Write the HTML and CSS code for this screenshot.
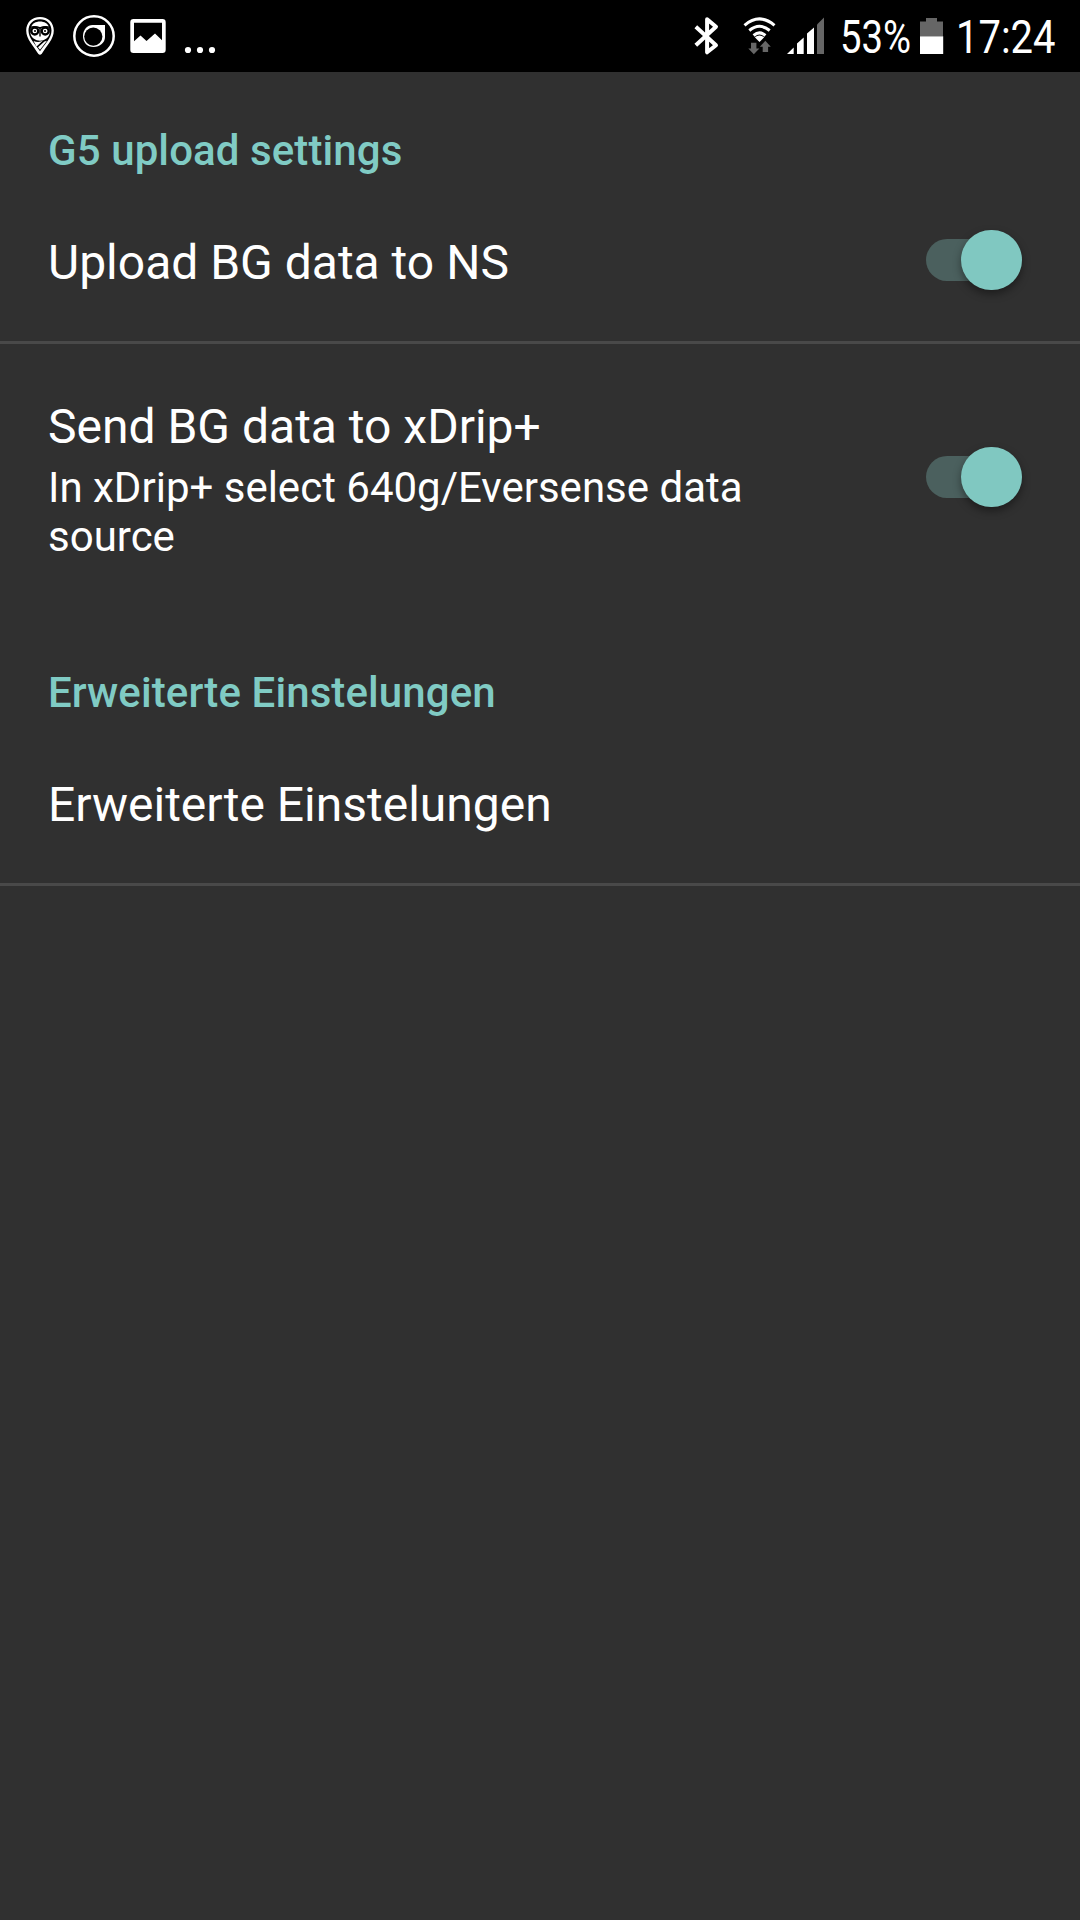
FILE: index.html
```html
<!DOCTYPE html>
<html lang="de">
<head>
<meta charset="utf-8">
<title>G5 upload settings</title>
<link rel="stylesheet" href="styles.css">
</head>
<body>
<header class="status">
  <div class="status-group notifications">
    <svg width="28" height="40" viewBox="26 16 28 40">
      <path d="M40 17c-8.300 0-13.800 5.800-13.800 13.500 0 8.800 7.400 15.500 12 23.300q1.800 1.800 3.600 0c4.600-7.800 12-14.500 12-23.300 0-7.700-5.500-13.500-13.800-13.500z" fill="#fff"/>
      <path d="M40 19.200c-6.700 0-11.500 4.700-11.500 11.300 0 7.500 6.500 13.500 11.500 20.700 5-7.200 11.500-13.200 11.500-20.700 0-6.600-4.800-11.300-11.500-11.300z" fill="#000"/>
      <path d="M31 27.500c1.500-8 16.500-8 18 0l.5 6c-1.500 9.500-17.500 9.500-19 0z" fill="#fff"/>
      <path d="M30 27.200q6-1.200 10 .8 4-2 10-.8" fill="none" stroke="#000" stroke-width="1.600"/>
      <g fill="#fff" stroke="#000" stroke-width="2.300"><circle cx="34.800" cy="31" r="3.500"/><circle cx="45.200" cy="31" r="3.500"/></g>
      <path d="M34 31h2M44 31h2M40 28v8.500" stroke="#000" stroke-width="1.400"/>
      <path d="M33.500 41q5.500 2 9.500-.5l-6.500 6zM44.500 41.500l2.500-.7-7 9-2-2.600z" fill="#fff"/>
    </svg>
    <svg class="ring" width="44" height="44" viewBox="72 14 44 44">
      <circle cx="94" cy="36" r="19.700" fill="none" stroke="#fff" stroke-width="2.500"/>
      <path d="M92.500 25H105v12c0 5.500-5 10-11.500 10S83 42.500 83 36s4.500-11 9.500-11z" fill="#fff"/>
      <circle cx="93.300" cy="36.600" r="9.100" fill="#000"/>
    </svg>
    <svg class="photo" width="36" height="36" viewBox="130 18 36 36">
      <path fill-rule="evenodd" d="M133.500 19h29q3.200 0 3.200 3.200v27.600q0 3.200-3.200 3.200h-29q-3.200 0-3.200-3.200V22.200q0-3.200 3.200-3.200zM134 22.700v18.500l6.500-5.700 6 5.400 8.500-7.400 7 6.700V22.700z" fill="#fff"/>
    </svg>
    <svg class="more" width="32" height="8" viewBox="184 46 32 8"><g fill="#fff"><circle cx="188" cy="50" r="3.100"/><circle cx="200" cy="50" r="3.100"/><circle cx="212" cy="50" r="3.100"/></g></svg>
  </div>
  <div class="status-group system">
    <svg width="28" height="40" viewBox="693 16 28 40">
      <path d="M695.800 26.800l20.200 18.400-8.900 7.100V19.200l8.900 7.500-20.200 18.500" fill="none" stroke="#fff" stroke-width="4" stroke-linejoin="round"/>
    </svg>
    <svg class="wifi" width="34" height="40" viewBox="743 15 34 40">
      <g fill="none" stroke="#fff" stroke-width="3"><path d="M744.500 25.300q15-12.800 30 0M749.300 30.500q10.200-8.400 20.400 0M753.600 35.500q5.900-5.200 11.800 0"/></g>
      <path d="M754.800 37.300q4.700-3.500 9.400 0l-4.700 4.700z" fill="#fff"/>
      <path d="M751 42.700h5.400v5.900h3l-5.600 5.700-5.500-5.700h2.700zM762.700 52v-5.200h-2.900l5.500-6 5.500 6h-2.700V52z" fill="#666"/>
    </svg>
    <svg class="signal" width="38" height="38" viewBox="787 17 38 38">
      <path d="M787 54l6.700-6.500V54zM797 54V43.500l6.700-6V54zM807 54V33.500l7-6V54z" fill="#fff"/>
      <path d="M817 54V24.500l7-7V54z" fill="#666"/>
    </svg>
    <svg class="percent" width="72" height="72" viewBox="840 0 72 72"><text x="840" y="53" textLength="71" lengthAdjust="spacingAndGlyphs">53%</text></svg>
    <svg class="battery" width="24" height="36" viewBox="920 18 24 36">
      <path d="M920 36.300V21.500h6V18h11v3.500h6v14.800z" fill="#666"/><path d="M920 36.300h23.200V54H920z" fill="#fff"/>
    </svg>
    <svg class="clock" width="100" height="72" viewBox="956 0 100 72"><text x="956" y="53" textLength="99.500" lengthAdjust="spacingAndGlyphs">17:24</text></svg>
  </div>
</header>
<main>
  <section>
    <h2 class="category">G5 upload settings</h2>
    <div class="row divided">
      <div class="label"><div class="title">Upload BG data to NS</div></div>
      <div class="switch"><div class="thumb"></div></div>
    </div>
    <div class="row tall">
      <div class="label">
        <div class="title">Send BG data to xDrip+</div>
        <div class="summary">In xDrip+ select 640g/Eversense data source</div>
      </div>
      <div class="switch"><div class="thumb"></div></div>
    </div>
  </section>
  <section>
    <h2 class="category">Erweiterte Einstelungen</h2>
    <div class="row divided">
      <div class="label"><div class="title">Erweiterte Einstelungen</div></div>
    </div>
  </section>
</main>
</body>
</html>
```
FILE: styles.css
```css
* { box-sizing: border-box; }
body {
  margin: 0;
  min-height: 1920px;
  background: #303030;
  color: #fff;
  font-family: Roboto, sans-serif;
}
.status {
  height: 72px;
  padding: 0 24px 0 26px;
  background: #000;
  display: flex;
  justify-content: space-between;
}
.status-group { display: flex; align-items: center; }
.status svg { display: block; flex: none; overflow: visible; }
.status text { font-size: 45.500px; fill: #fff; }
.ring { margin-left: 18px; }
.photo { margin-left: 14px; }
.more { margin: 28px 0 0 18px; }
.wifi { margin: 0 0 2px 22px; }
.signal { margin-left: 10px; }
.percent { margin-left: 15px; }
.battery { margin-left: 8px; }
.clock { margin-left: 12px; }
.category {
  height: 107px;
  margin: 0;
  padding: 54px 48px 0;
  color: #80cbc4;
  font-size: 42px;
  font-weight: 500;
  line-height: 49px;
  letter-spacing: 0.09px;
}
.row {
  height: 162px;
  padding: 0 48px;
  display: flex;
  align-items: center;
  justify-content: space-between;
}
.divided { height: 165px; border-bottom: 3px solid #494949; }
.tall { height: 267px; margin-bottom: 3px; }
.label { width: 720px; padding-top: 6px; }
.tall .label { padding-top: 5px; }
.title { font-size: 48px; line-height: 56px; }
.summary { margin-top: 8px; font-size: 42px; line-height: 49px; }
.switch {
  width: 96px;
  height: 42px;
  margin-right: 10px;
  border-radius: 21px;
  background: #4b605e;
  display: flex;
  align-items: center;
  justify-content: flex-end;
}
.tall .switch { margin-bottom: 1px; }
.thumb {
  width: 60.500px;
  height: 60.500px;
  margin-right: 0.300px;
  border-radius: 50%;
  background: #80c8c1;
  box-shadow: 0 4px 8px rgba(0, 0, 0, .4);
}
```
